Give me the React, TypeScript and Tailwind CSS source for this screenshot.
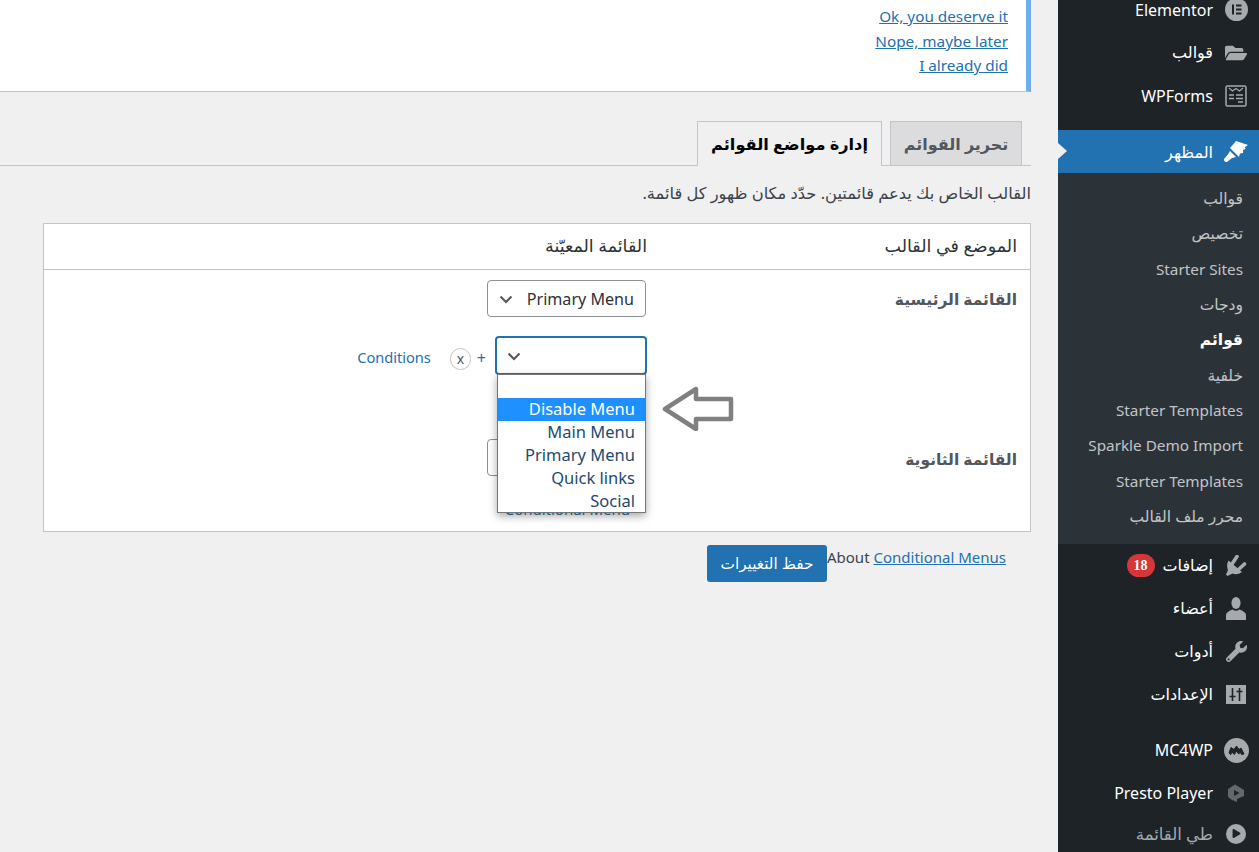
import React from "react";
import { FaFolderOpen, FaWrench, FaPlay } from "react-icons/fa";

const FONT = "font-['Noto_Sans','DejaVu_Sans',sans-serif]";

function Elementor() {
  return (
    <svg width="23" height="23" viewBox="0 0 23 23">
      <circle cx="11.5" cy="11.5" r="11.5" fill="#a7aaad" />
      <rect x="7" y="6.5" width="2" height="10" fill="#1d2327" />
      <rect x="11" y="6.5" width="5.5" height="2" fill="#1d2327" />
      <rect x="11" y="10.5" width="5.5" height="2" fill="#1d2327" />
      <rect x="11" y="14.5" width="5.5" height="2" fill="#1d2327" />
    </svg>
  );
}
function WPForms() {
  return (
    <svg width="22" height="22" viewBox="0 0 22 22" fill="none" stroke="#a7aaad">
      <rect x="1" y="1" width="20" height="20" rx="1.5" strokeWidth="1.5" />
      <path d="M4 3l3.5 3L11 3.5 14.5 6 18 3" strokeWidth="1.2" />
      <path d="M4 10h5M11 10h7M4 13.5h5M11 13.5h7M13 17h5" strokeWidth="1.4" />
    </svg>
  );
}
function Brush() {
  return (
    <svg width="24" height="23" viewBox="0 0 24 23" fill="#fff">
      <path d="M12 1L24 5l-3 2 .5 2-2.5 1v3l-3 .5-1 3.5L6 8z" />
      <path d="M6 11l6 6-4 1-5 4q-3 .5-3-3l3.5-4z" />
    </svg>
  );
}
function Plug() {
  return (
    <svg width="22" height="21" viewBox="10 5 22 21" fill="#a7aaad">
      <path d="M13.5 10.5L27 22q-5 3.5-9.5 1.5L12.5 26 11 24.5l2-4.5q-2-5 .5-9.5z" />
      <path d="M17 14l5-7.5" stroke="#a7aaad" strokeWidth="3.6" strokeLinecap="round" fill="none" />
      <path d="M23 20l6.5-6" stroke="#a7aaad" strokeWidth="3.6" strokeLinecap="round" fill="none" />
    </svg>
  );
}
function User() {
  return (
    <svg width="20" height="23" viewBox="0 0 20 23" fill="#a7aaad">
      <ellipse cx="10" cy="6" rx="4.6" ry="6" />
      <path d="M0 23v-5q0-3 6.5-5.5 3.5 2.5 7 0 6.5 2.5 6.5 5.5v5z" />
    </svg>
  );
}
function Settings() {
  return (
    <svg width="20" height="19" viewBox="0 0 20 19">
      <rect width="20" height="19" fill="#a7aaad" />
      <path d="M6.5 3v13M3.5 11.5h6M13.5 3v13M10.5 6.5h6" stroke="#1d2327" strokeWidth="1.6" fill="none" />
    </svg>
  );
}
function MC4WP() {
  return (
    <svg width="25" height="25" viewBox="0 0 25 25">
      <circle cx="12.5" cy="12.5" r="12.5" fill="#a7aaad" />
      <path d="M5 15l2-5.5 3 2 2.5-3.5 2.5 3.5 2-1.5 3 6-2.4.6-1.4-2.5-1.4 2-2.4-3-2 3.4-2.5-2.4-1.2 2.6z" fill="#1d2327" stroke="#1d2327" strokeWidth="1" />
    </svg>
  );
}
function Presto() {
  return (
    <svg width="18" height="18" viewBox="0 0 18 18">
      <path d="M1 5l7-4.5L17 6v6l-7 3v3l-5-2-4-3z" fill="#62676b" />
      <path d="M7 6l5.5 3L7 12z" fill="#1d2327" />
    </svg>
  );
}

function TopItem({ icon, label, arabic, extra }: { icon: React.ReactNode; label: string; arabic?: boolean; extra?: React.ReactNode }) {
  return (
    <div className="flex items-center h-[43px] text-white text-[16px]">
      <div className="w-[46px] flex items-center justify-center shrink-0 text-[#a7aaad]">{icon}</div>
      <span className={arabic ? "pb-[1px]" : ""}>{label}</span>
      {extra}
    </div>
  );
}

function Sub({ label, bold, latin }: { label: string; bold?: boolean; latin?: boolean }) {
  return (
    <div className={`h-[35.3px] flex items-center pr-[16px] ${latin ? "text-[15.3px]" : "text-[15.5px]"} ${bold ? "text-white font-bold" : "text-[#c3c4c7]"}`}>{label}</div>
  );
}

function Sidebar() {
  return (
    <aside className="w-[201px] shrink-0 bg-[#1d2327]">
      <div className="-mt-[12px]">
        <TopItem icon={<Elementor />} label="Elementor" />
        <TopItem icon={<FaFolderOpen size={22} />} label="قوالب" arabic />
        <TopItem icon={<WPForms />} label="WPForms" />
        <div className="h-[13px]" />
        <div className="relative h-[43px] bg-[#2271b1] flex items-center text-white text-[16px]">
          <div className="w-[46px] flex items-center justify-center shrink-0"><Brush /></div>
          <span>المظهر</span>
          <div className="absolute left-0 top-[13px] w-0 h-0 border-y-[8px] border-y-transparent border-l-[9px] border-l-[#f0f0f1]" />
        </div>
        <div className="bg-[#2c3338] pt-[8px] pb-[10px]">
          <Sub label="قوالب" />
          <Sub label="تخصيص" />
          <Sub label="Starter Sites" latin />
          <Sub label="ودجات" />
          <Sub label="قوائم" bold />
          <Sub label="خلفية" />
          <Sub label="Starter Templates" latin />
          <Sub label="Sparkle Demo Import" latin />
          <Sub label="Starter Templates" latin />
          <Sub label="محرر ملف القالب" />
        </div>
        <TopItem icon={<Plug />} label="إضافات" arabic extra={
          <span className="mr-[8px] w-[28px] h-[23px] rounded-full bg-[#d63638] text-white text-[14px] font-['Liberation_Serif',serif] font-semibold flex items-center justify-center">18</span>
        } />
        <TopItem icon={<User />} label="أعضاء" arabic />
        <TopItem icon={<FaWrench size={21} />} label="أدوات" arabic />
        <TopItem icon={<Settings />} label="الإعدادات" arabic />
        <div className="h-[13px]" />
        <TopItem icon={<MC4WP />} label="MC4WP" />
        <TopItem icon={<Presto />} label="Presto Player" />
        <div className="flex items-center h-[38px] text-[#a7aaad] text-[16.5px]">
          <div className="w-[46px] flex items-center justify-center shrink-0">
            <span className="w-[20px] h-[20px] rounded-full bg-[#a7aaad] flex items-center justify-center text-[#1d2327]"><FaPlay size={9} className="ml-[1px]" /></span>
          </div>
          <span>طي القائمة</span>
        </div>
      </div>
    </aside>
  );
}

function Link({ children }: { children: React.ReactNode }) {
  return <a className="text-[#2271b1] underline">{children}</a>;
}

function Chevron() {
  return (
    <svg width="16" height="16" viewBox="0 0 16 16" fill="none" stroke="#50575e" strokeWidth="2">
      <path d="M2.5 5.5L8 11l5.5-5.5" />
    </svg>
  );
}

function Select({ value, focus, className = "" }: { value?: string; focus?: boolean; className?: string }) {
  return (
    <div className={`flex items-center justify-between pr-[11px] rounded-[4px] bg-white text-[#2c3338] text-[16.1px] ${focus ? "h-[39px] pl-[9px] border-2 border-[#2271b1]" : "h-[37px] pl-[10px] border border-[#8c8f94]"} ${className}`}>
      <span className="pt-[1px]">{value}</span>
      <Chevron />
    </div>
  );
}

function Main() {
  return (
    <main className="flex-1 min-w-0 pr-[27px] bg-[#f0f0f1]">
      <div className="bg-white border-r-[5px] border-r-[#72aee6] border-b border-b-[#c3c4c7] h-[92px] pt-[4px] pr-[18px] text-[15.3px] leading-[24.5px]">
        <div><Link>Ok, you deserve it</Link></div>
        <div><Link>Nope, maybe later</Link></div>
        <div><Link>I already did</Link></div>
      </div>

      <div className="mt-[29px] h-[45px] border-b border-[#c3c4c7] flex items-end pr-[9px] gap-[8px]">
        <div className="h-[44px] w-[132px] pt-[1px] flex items-center justify-center bg-[#dcdcde] border border-[#c3c4c7] border-b-0 text-[#50575e] font-bold text-[16px] whitespace-nowrap">تحرير القوائم</div>
        <div className="h-[45px] w-[185px] -mb-px pt-[1px] flex items-center justify-center bg-[#f0f0f1] border border-[#c3c4c7] border-b-0 text-black font-bold text-[16.2px] whitespace-nowrap">إدارة مواضع القوائم</div>
      </div>

      <p className="mt-[16px] text-[16.3px] leading-[22px] text-[#3c434a]">القالب الخاص بك يدعم قائمتين. حدّد مكان ظهور كل قائمة.</p>

      <div className="mt-[19px] ml-[43px] bg-white border border-[#c3c4c7] h-[309px] relative">
        <div className="h-[46px] pb-[2px] border-b border-[#c3c4c7] flex items-center text-[17.5px] text-[#2c3338]">
          <div className="w-[383px] pr-[13px]">الموضع في القالب</div>
          <div>القائمة المعيّنة</div>
        </div>
        <div className="flex pt-[10px]">
          <div className="w-[369px] pr-[13px] pt-[8px] text-[15.5px] font-bold text-[#50575e]">القائمة الرئيسية</div>
          <div className="flex flex-col">
            <Select value="Primary Menu" className="w-[159px] mr-[15px]" />
            <div className="flex items-center mt-[19px] mr-[14px] h-[39px]">
              <Select focus className="w-[152px]" />
              <span className="text-[#2271b1] text-[16px] mr-[9px] mt-[5px]">+</span>
              <span className="mr-[6px] mt-[6px] w-[21px] h-[22px] rounded-full border border-[#c3c4c7] text-[14px] text-[#50575e] flex items-center justify-center">x</span>
              <a className="mr-[19px] mt-[4px] text-[#2271b1] text-[14.6px]">Conditions</a>
            </div>
          </div>
        </div>
        <div className="flex mt-[64px]">
          <div className="w-[369px] pr-[13px] pt-[9px] text-[15.5px] font-bold text-[#50575e]">القائمة الثانوية</div>
          <div className="flex flex-col">
            <Select className="w-[159px] mr-[15px]" />
            <a className="mr-[31px] mt-[23px] text-[#2271b1] text-[15px] whitespace-nowrap leading-[20px]">Conditional Menu</a>
          </div>
        </div>
        <div className="absolute top-[150px] left-[453px] w-[149px] h-[139px] bg-white border border-[#767676] shadow-[0_3px_8px_rgba(0,0,0,0.35)] text-[16.5px] leading-[21px] text-[#1d4a72] text-right pr-[10px] pt-[23px]">
          <div className="bg-[#1e90ff] text-white -mr-[10px] pr-[10px] h-[23px]">Disable Menu</div>
          <div className="h-[23px]">Main Menu</div>
          <div className="h-[23px]">Primary Menu</div>
          <div className="h-[23px]">Quick links</div>
          <div className="h-[23px]">Social</div>
        </div>
        <svg className="absolute top-[159px] left-[618px]" width="72" height="48" viewBox="0 0 72 48" fill="none" stroke="#808080" strokeWidth="4.5" strokeLinejoin="round">
          <path d="M3 26L34 6v10h35v20H34v10z" />
        </svg>
      </div>

      <div className="mt-[13px] flex items-start h-[37px] mr-[25px] text-[15px] leading-[24px] text-[#3c434a]">
        <span dir="ltr">About <Link>Conditional Menus</Link></span>
        <button className="h-[37px] w-[120px] pb-[1px] rounded-[3px] bg-[#2271b1] text-white text-[15.3px]">حفظ التغييرات</button>
      </div>
    </main>
  );
}

export default function App() {
  return (
    <div dir="rtl" className={`${FONT} h-[852px] w-[1259px] overflow-hidden flex bg-[#f0f0f1]`}>
      <Sidebar />
      <Main />
    </div>
  );
}
